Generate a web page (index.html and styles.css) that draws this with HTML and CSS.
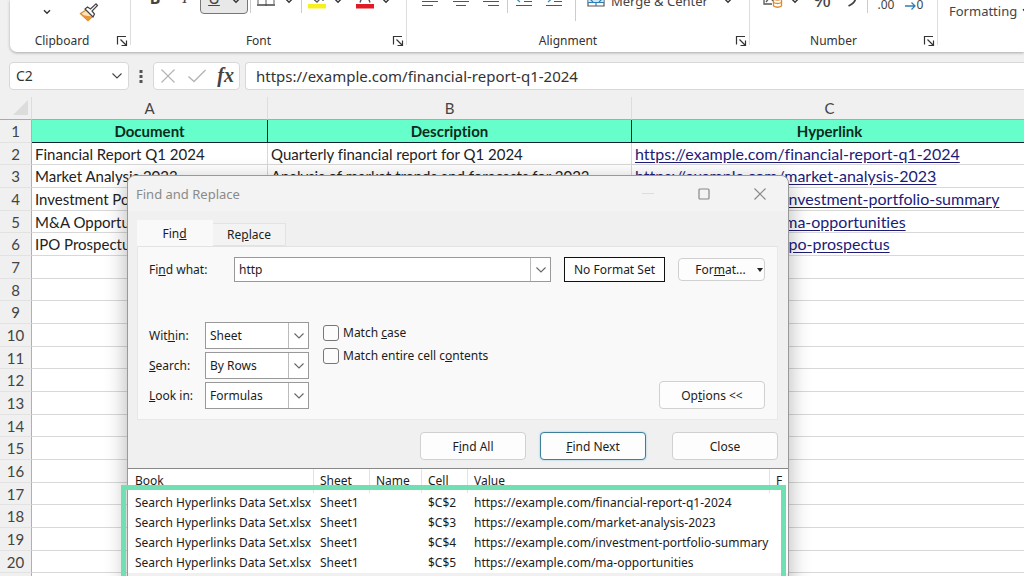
FILE: index.html
```html
<!DOCTYPE html>
<html lang="en">
<head>
<meta charset="utf-8">
<title>Find and Replace</title>
<link rel="stylesheet" href="styles.css">
</head>
<body>
<svg class="defs" aria-hidden="true">
  <symbol id="chev" viewBox="0 0 8 6"><path d="M1 1.2l3 3 3-3" fill="none" stroke="#333" stroke-width="1.4"/></symbol>
  <symbol id="down" viewBox="0 0 12 8"><path d="M1.5 1.5L6 6l4.500-4.500" fill="none" stroke="currentColor" stroke-width="1.1"/></symbol>
  <symbol id="launch" viewBox="0 0 12 12"><path d="M1.500 9.500V1.500H10M4.500 4.500l5.500 5.500M10.500 5.500V10.500H5.500" fill="none" stroke="#333" stroke-width="1.200"/></symbol>
</svg>
<div class="app">
  <header class="ribbon">
    <section class="group">
      <div class="tools tools-clip">
        <button class="paste" aria-label="Paste options"><svg width="8" height="6"><use href="#chev"/></svg></button>
        <button class="brush" aria-label="Format Painter"><svg width="20" height="20" viewBox="0 0 20 20"><path d="M1.500 11.500L8 7.500l6 6.500-5 4.500z" fill="#fbe3bd" stroke="#dd8a2c" stroke-width="1.300"/><path d="M3 13l6 5.500 4-4-4-.500z" fill="#e8963a"/><path d="M6 7l8 8 1.500-3-2.500-3 5.500-5.500-1.500-1.700L11.500 7 8.500 5z" fill="#fff" stroke="#444" stroke-width="1.200"/></svg></button>
      </div>
      <div class="caption"><span>Clipboard</span><button class="launch" aria-label="Clipboard settings"><svg width="12" height="12"><use href="#launch"/></svg></button></div>
    </section>
    <section class="group">
      <div class="tools tools-font">
        <button aria-label="Bold"><b>B</b></button>
        <button aria-label="Italic"><i class="serif">I</i></button>
        <button class="pressed" aria-label="Underline"><u>U</u><svg width="8" height="6"><use href="#chev"/></svg></button>
        <span class="sep"></span>
        <button aria-label="Borders"><svg width="18" height="20" viewBox="0 0 18 20"><path d="M1 0v16M9 0v18M17 0v16M1 10h16" fill="none" stroke="#777" stroke-width="1.200"/><path d="M0 17h18" stroke="#444" stroke-width="1.500"/></svg></button>
        <button class="menu" aria-label="Border options"><svg width="8" height="6"><use href="#chev"/></svg></button>
        <span class="sep"></span>
        <button aria-label="Fill color"><svg width="20" height="24" viewBox="0 0 20 24"><path d="M4 11l6-6 5 6-5 5zM16 10v5" fill="#fff" stroke="#555" stroke-width="1.300"/><path d="M1 18h18v4.500H1z" fill="#f7f01c"/></svg></button>
        <button class="menu" aria-label="Fill options"><svg width="8" height="6"><use href="#chev"/></svg></button>
        <button aria-label="Font color"><svg width="20" height="24" viewBox="0 0 20 24"><path d="M5 16.500L10 3l5 13.500M6.500 12.500h7" fill="none" stroke="#555" stroke-width="1.400"/><path d="M1 18h18v4.500H1z" fill="#e01b24"/></svg></button>
        <button class="menu" aria-label="Font color options"><svg width="8" height="6"><use href="#chev"/></svg></button>
      </div>
      <div class="caption"><span>Font</span><button class="launch" aria-label="Font settings"><svg width="12" height="12"><use href="#launch"/></svg></button></div>
    </section>
    <section class="group">
      <div class="tools tools-align">
        <button aria-label="Align left"><svg width="18" height="18" viewBox="0 0 18 18"><path d="M1 8.500h16M1 12.500h16M1 16.500h11" stroke="#555" stroke-width="1.200"/></svg></button>
        <button aria-label="Center"><svg width="18" height="18" viewBox="0 0 18 18"><path d="M1 8.500h16M1 12.500h16M4 16.500h10" stroke="#555" stroke-width="1.200"/></svg></button>
        <button aria-label="Align right"><svg width="18" height="18" viewBox="0 0 18 18"><path d="M1 8.500h16M1 12.500h16M6 16.500h11" stroke="#555" stroke-width="1.200"/></svg></button>
        <span class="sep"></span>
        <button aria-label="Decrease indent"><svg width="18" height="18" viewBox="0 0 18 18"><path d="M9 12.500h8M1 16.500h16M10 8.500h7" stroke="#555" stroke-width="1.200"/><path d="M5 6l-4 3.500L5 13M1 9.500h6" fill="none" stroke="#3a8fc4" stroke-width="1.300"/></svg></button>
        <button aria-label="Increase indent"><svg width="18" height="18" viewBox="0 0 18 18"><path d="M9 12.500h8M1 16.500h16M10 8.500h7" stroke="#555" stroke-width="1.200"/><path d="M3 6l4 3.500L3 13M1 9.500h6" fill="none" stroke="#3a8fc4" stroke-width="1.300"/></svg></button>
        <span class="sep long"></span>
        <button aria-label="Merge"><svg width="18" height="18" viewBox="0 0 18 18"><path d="M1 1h16v16H1z" fill="#fff" stroke="#555" stroke-width="1.200"/><path d="M1.500 6h15v7h-15z" fill="#cde8f7"/><path d="M4 10.500h10M6 8l-2.500 2.500L6 13M12 8l2.500 2.500L12 13M1 13.500h16M9 13.500V17" fill="none" stroke="#2e7fb5" stroke-width="1.200"/></svg></button>
        <button class="merge">Merge &amp; Center</button>
        <button class="menu" aria-label="Merge options"><svg width="8" height="6"><use href="#chev"/></svg></button>
      </div>
      <div class="caption"><span>Alignment</span><button class="launch" aria-label="Alignment settings"><svg width="12" height="12"><use href="#launch"/></svg></button></div>
    </section>
    <section class="group">
      <div class="tools tools-num">
        <button aria-label="Accounting format"><svg width="20" height="22" viewBox="0 0 20 22"><path d="M1 2v15h8M3 15l4-5 3 4" fill="none" stroke="#555" stroke-width="1.300"/><path d="M10.500 6h8v13q-4 2.500-8 0z" fill="#fff" stroke="#dd8a2c" stroke-width="1.300"/><path d="M10.500 12q4 2 8 0M10.500 15.500q4 2 8 0" fill="none" stroke="#dd8a2c" stroke-width="1.300"/></svg></button>
        <button class="menu" aria-label="Accounting options"><svg width="8" height="6"><use href="#chev"/></svg></button>
        <button class="big" aria-label="Percent">%</button>
        <button aria-label="Comma style"><svg width="10" height="20" viewBox="0 0 10 20"><path d="M5 5q4 1 3.500 5.500T1.500 18" fill="none" stroke="#444" stroke-width="1.800"/></svg></button>
        <span class="sep"></span>
        <button class="dec" aria-label="Increase decimal">.00</button>
        <button class="dec" aria-label="Decrease decimal"><svg width="12" height="14" viewBox="0 0 12 14"><path d="M0 7h10M6.500 3.500L10 7l-3.500 3.500" fill="none" stroke="#2e7fb5" stroke-width="1.300"/></svg>0</button>
      </div>
      <div class="caption"><span>Number</span><button class="launch" aria-label="Number settings"><svg width="12" height="12"><use href="#launch"/></svg></button></div>
    </section>
    <section class="group last"><button class="cond">Formatting <svg width="8" height="6"><use href="#chev"/></svg></button></section>
  </header>

  <div class="formula-bar">
    <div class="box name-box"><input aria-label="Name box" value="C2"><svg width="12" height="8"><use href="#down"/></svg></div>
    <svg class="dots" width="4" height="14" viewBox="0 0 4 14"><path d="M.500 1h3v3h-3zM.500 6h3v3h-3zM.500 11h3v3h-3z" fill="#555"/></svg>
    <div class="box fx-box">
      <button aria-label="Cancel"><svg width="16" height="16" viewBox="0 0 16 16"><path d="M1.500 1.500l13 13M14.500 1.500l-13 13" stroke="#b5b5b5" stroke-width="1.200"/></svg></button>
      <button aria-label="Enter"><svg width="20" height="16" viewBox="0 0 20 16"><path d="M1.500 8.500l5.500 5L18.500 2" fill="none" stroke="#b5b5b5" stroke-width="1.400"/></svg></button>
      <button class="fx" aria-label="Insert function">fx</button>
    </div>
    <div class="box formula"><input aria-label="Formula" value="https://example.com/financial-report-q1-2024"></div>
  </div>

  <main class="sheet">
    <table class="grid">
      <colgroup><col class="c-num"><col class="c-a"><col class="c-b"><col></colgroup>
      <thead><tr><th class="corner"><svg width="15" height="15" viewBox="0 0 15 15"><path d="M15 0v15H0z" fill="#dcdcdc"/></svg></th><th>A</th><th>B</th><th>C</th></tr></thead>
      <tbody>
        <tr class="head"><th>1</th><td>Document</td><td>Description</td><td>Hyperlink</td></tr>
        <tr><th>2</th><td>Financial Report Q1 2024</td><td>Quarterly financial report for Q1 2024</td><td><a href="#">https://example.com/financial-report-q1-2024</a></td></tr>
        <tr><th>3</th><td>Market Analysis 2023</td><td>Analysis of market trends and forecasts for 2023</td><td><a href="#">https://example.com/market-analysis-2023</a></td></tr>
        <tr><th>4</th><td>Investment Portfolio</td><td></td><td><a href="#">https://example.com/investment-portfolio-summary</a></td></tr>
        <tr><th>5</th><td>M&amp;A Opportunities</td><td></td><td><a href="#">https://example.com/ma-opportunities</a></td></tr>
        <tr><th>6</th><td>IPO Prospectus</td><td></td><td><a href="#">https://example.com/ipo-prospectus</a></td></tr>
        <tr><th>7</th><td></td><td></td><td></td></tr>
        <tr><th>8</th><td></td><td></td><td></td></tr>
        <tr><th>9</th><td></td><td></td><td></td></tr>
        <tr><th>10</th><td></td><td></td><td></td></tr>
        <tr><th>11</th><td></td><td></td><td></td></tr>
        <tr><th>12</th><td></td><td></td><td></td></tr>
        <tr><th>13</th><td></td><td></td><td></td></tr>
        <tr><th>14</th><td></td><td></td><td></td></tr>
        <tr><th>15</th><td></td><td></td><td></td></tr>
        <tr><th>16</th><td></td><td></td><td></td></tr>
        <tr><th>17</th><td></td><td></td><td></td></tr>
        <tr><th>18</th><td></td><td></td><td></td></tr>
        <tr><th>19</th><td></td><td></td><td></td></tr>
        <tr><th>20</th><td></td><td></td><td></td></tr>
        <tr><th></th><td></td><td></td><td></td></tr>
      </tbody>
    </table>
  </main>

  <div class="dialog" role="dialog" aria-label="Find and Replace">
    <div class="titlebar">
      <span class="title">Find and Replace</span>
      <button aria-label="Minimize"><svg width="12" height="12" viewBox="0 0 12 12"><path d="M0 5.500h12" stroke="#ddd"/></svg></button>
      <button aria-label="Maximize"><svg width="12" height="12" viewBox="0 0 12 12"><rect x="1" y="1" width="10" height="10" rx="1" fill="none" stroke="#888" stroke-width="1.200"/></svg></button>
      <button aria-label="Close window"><svg width="12" height="12" viewBox="0 0 12 12"><path d="M.500.500l11 11M11.500.500l-11 11" stroke="#888" stroke-width="1.200"/></svg></button>
    </div>
    <div class="tabs"><button class="tab active">Fin<u>d</u></button><button class="tab">Re<u>p</u>lace</button></div>
    <div class="panel">
      <div class="find-row">
        <label for="what">Fi<u>n</u>d what:</label>
        <div class="combo"><input id="what" value="http"><button aria-label="History"><svg width="12" height="8"><use href="#down"/></svg></button></div>
        <output class="preview">No Format Set</output>
        <button class="btn format"><span>For<u>m</u>at...</span><svg width="6" height="4" viewBox="0 0 6 4"><path d="M0 0h6L3 4z" fill="#222"/></svg></button>
      </div>
      <div class="options">
        <div class="fields">
          <label for="within">Wit<u>h</u>in:</label><div class="combo"><select id="within"><option>Sheet</option></select><span><svg width="12" height="8"><use href="#down"/></svg></span></div>
          <label for="search"><u>S</u>earch:</label><div class="combo"><select id="search"><option>By Rows</option></select><span><svg width="12" height="8"><use href="#down"/></svg></span></div>
          <label for="look"><u>L</u>ook in:</label><div class="combo"><select id="look"><option>Formulas</option></select><span><svg width="12" height="8"><use href="#down"/></svg></span></div>
        </div>
        <div class="checks">
          <label><input type="checkbox"><span>Match <u>c</u>ase</span></label>
          <label><input type="checkbox"><span>Match entire cell c<u>o</u>ntents</span></label>
        </div>
        <button class="btn opt">Op<u>t</u>ions &lt;&lt;</button>
      </div>
    </div>
    <div class="actions"><button class="btn">F<u>i</u>nd All</button><button class="btn primary"><u>F</u>ind Next</button><button class="btn close">Close</button></div>
    <table class="results">
      <colgroup><col class="r-book"><col class="r-sheet"><col class="r-name"><col class="r-cell"><col><col class="r-last"></colgroup>
      <thead><tr><th>Book</th><th>Sheet</th><th>Name</th><th>Cell</th><th>Value</th><th>F</th></tr></thead>
      <tbody>
        <tr><td>Search Hyperlinks Data Set.xlsx</td><td>Sheet1</td><td></td><td>$C$2</td><td>https://example.com/financial-report-q1-2024</td><td></td></tr>
        <tr><td>Search Hyperlinks Data Set.xlsx</td><td>Sheet1</td><td></td><td>$C$3</td><td>https://example.com/market-analysis-2023</td><td></td></tr>
        <tr><td>Search Hyperlinks Data Set.xlsx</td><td>Sheet1</td><td></td><td>$C$4</td><td>https://example.com/investment-portfolio-summary</td><td></td></tr>
        <tr><td>Search Hyperlinks Data Set.xlsx</td><td>Sheet1</td><td></td><td>$C$5</td><td>https://example.com/ma-opportunities</td><td></td></tr>
      </tbody>
    </table>
    <div class="highlight"></div>
  </div>
</div>
</body>
</html>
```
FILE: styles.css
```css
* { box-sizing: border-box; }
body { margin: 0; background: #f0f0f0; color: #222; font: 12px "Noto Sans", sans-serif; }
button, input, select { font: inherit; color: inherit; margin: 0; }
button { padding: 0; border: 0; background: none; display: flex; align-items: center; justify-content: center; white-space: nowrap; }
.defs { position: absolute; width: 0; height: 0; }
.app { position: relative; height: 100vh; overflow: hidden; }

/* Ribbon */
.ribbon { display: grid; grid-template-columns: 121px 276px 343px 188px 1fr; height: 52px; margin-left: 10px; background: #fff; border-bottom-left-radius: 7px; box-shadow: 0 1px 3px rgba(0,0,0,.3); color: #444; }
.group { display: flex; flex-direction: column; justify-content: space-between; min-width: 0; border-right: 1px solid #ddd; margin-bottom: 7px; }
.last { border: 0; }
.caption { display: grid; grid-template-columns: 16px 1fr 16px; align-items: center; height: 16px; margin-bottom: -3px; color: #333; }
.caption span { grid-column: 2; text-align: center; margin-left: -16px; }
.group:nth-child(n+2) .caption span { margin-left: -20px; }
.launch { grid-column: 3; }
.tools { display: grid; height: 14px; margin-top: -18px; font-size: 16px; }
.tools > button { height: 32px; }
.tools-clip { grid-template-columns: 74px 10px; margin-top: 0; }
.tools-clip > button { height: 24px; }
.tools-font { grid-template-columns: 30px 30px 48px 4px 28px 18px 7px 24px 18px 36px 6px; padding-left: 9px; }
.tools-align { grid-template-columns: 30px 32px 28px 4px 30px 30px 12px 30px 108px 18px; padding-left: 8px; }
.tools-num { grid-template-columns: 34px 10px 44px 16px 14px 24px 32px; padding-left: 6px; }
.tools svg { flex: none; }
.tools .menu { padding-top: 6px; }
.serif { font-family: "Liberation Serif", serif; }
.pressed { gap: 12px; border: 1px solid #777; border-radius: 4px; background: #e8e8e8; }
.pressed svg { margin-top: 6px; }
.sep { width: 1px; height: 31px; justify-self: center; background: #ccc; }
.long { height: 39px; }
.tools .merge { font-size: 13px; justify-content: flex-start; padding-top: 6px; }
.big { font-size: 22px; }
.tools .dec { font-size: 12px; align-items: flex-end; padding-bottom: 1px; }
.cond { justify-content: flex-start; gap: 5px; margin: 1px 0 0 11px; font-size: 13px; height: 20px; }
.cond svg { flex: none; }

/* Formula bar */
.formula-bar { display: flex; align-items: center; height: 27px; margin: 10px 0 0 9px; }
.box { display: flex; align-items: center; height: 28px; background: #fff; border: 1px solid #d8d8d8; border-radius: 4px; }
.box input { width: 100%; border: 0; outline: 0; padding: 0; background: none; font-size: 15px; color: #333; }
.box .name, .name-box input { font-size: 14px; }
.name-box { width: 120px; padding: 0 5px 0 6px; color: #444; }
.name-box svg { flex: none; }
.dots { margin: 0 10px; }
.fx-box { width: 87px; padding: 0 5px 0 6px; justify-content: space-between; }
.fx { font: italic bold 20px "Liberation Serif", serif; color: #444; }
.formula { flex: 1; margin-left: 5px; padding-left: 10px; border-right: 0; border-radius: 4px 0 0 4px; }

/* Sheet */
.sheet { margin-top: 8px; }
.grid { width: 1028px; min-width: 100%; table-layout: fixed; border-collapse: separate; border-spacing: 0; font: 15px "Lato", sans-serif; font-variant-ligatures: none; color: #222; }
.c-num { width: 32px; }
.c-a { width: 236px; }
.c-b { width: 364px; }
.grid th { font-weight: 400; color: #444; padding: 0; line-height: 20px; background: #f0f0f0; border-right: 1px solid #b0b0b0; }
.grid thead th { height: 23px; border-right-color: #ddd; border-bottom: 1px solid #aaa; line-height: 21px; }
.grid .corner { text-align: right; vertical-align: bottom; }
.corner svg { display: inline-block; vertical-align: bottom; margin: 0 3px 4px 0; }
.grid tbody th { border-bottom: 1px solid #e2e2e2; }
.grid td { height: 23px; padding: 0 0 0 3px; line-height: 20px; background: #fff; border-right: 1px solid #d8d8d8; border-bottom: 1px solid #d8d8d8; white-space: nowrap; overflow: hidden; }
.grid tbody tr:nth-child(3n+2) td { height: 22px; }
.grid .head td { padding: 0; background: #66ffcc; border-color: #123; text-align: center; font-weight: 700; color: #0c2b20; }
.grid a { font-size: 16px; color: #1c1c78; text-underline-offset: 2px; }

/* Find and Replace window */
.dialog { position: absolute; left: 127px; top: 175px; width: 662px; height: 440px; background: #f0f0f0; border: 1px solid #999; border-radius: 8px 8px 0 0; box-shadow: 0 6px 22px rgba(0,0,0,.3); color: #1c1c1c; }
.titlebar { display: flex; align-items: center; height: 35px; padding: 0 14px 0 8px; border-radius: 8px 8px 0 0; background: #f3f3f3; }
.title { flex: 1; font-size: 13px; color: #8a8a8a; }
.titlebar button { width: 28px; margin-left: 28px; }
.tabs { display: flex; align-items: flex-end; height: 35px; padding-left: 9px; }
.tab { width: 73px; height: 23px; border: 1px solid #e3e3e3; border-left: 0; background: #f3f3f3; }
.tab.active { width: 76px; height: 26px; background: #f9f9f9; border-color: #f9f9f9; }
.panel { height: 174px; margin: 0 10px 0 9px; padding: 10px 12px 0 11px; background: #f9f9f9; border: 1px solid #e8e8e8; border-top-color: #e3e3e3; }
.find-row { display: flex; align-items: center; height: 25px; }
.find-row label { width: 85px; }
.find-row .combo { flex: 1; height: 25px; }
.combo { display: flex; min-width: 0; height: 27px; border: 1px solid #999; background: #fff; color: #666; }
.combo input, .combo select { flex: 1; min-width: 0; padding: 0 4px; border: 0; outline: 0; background: none; appearance: none; color: #1c1c1c; }
.combo button, .combo span { display: flex; align-items: center; justify-content: center; width: 20px; border-left: 1px solid #bbb; }
.preview { display: flex; align-items: center; justify-content: center; width: 101px; height: 25px; margin: 0 13px; border: 1px solid #111; background: #fff; white-space: nowrap; }
.btn { width: 106px; height: 28px; background: #fdfdfd; border: 1px solid #d0d0d0; border-radius: 4px; }
.format { width: 87px; height: 23px; gap: 11px; padding-left: 15px; }
.options { display: flex; height: 87px; margin-top: 40px; }
.fields { display: grid; grid-template-columns: 56px 104px; gap: 3px 0; align-content: start; align-items: center; }
.checks { display: flex; flex: 1; flex-direction: column; gap: 6px; margin: 2px 0 0 14px; }
.checks label { display: flex; align-items: center; height: 17px; gap: 4px; }
.checks input { appearance: none; width: 16px; height: 16px; margin: 0; border: 1px solid #777; border-radius: 3px; background: #fcfcfc; }
.opt { align-self: flex-end; }
.actions { display: flex; justify-content: flex-end; gap: 14px; height: 48px; padding: 12px 10px 0 0; }
.close { margin-left: 12px; }
.primary { border-color: #3b7f9c; box-shadow: 0 0 2px #7cc6e6; }
.results { width: 100%; table-layout: fixed; border-collapse: separate; border-spacing: 0; background: #fff; border-top: 1px solid #888; }
.r-book { width: 186px; }
.r-sheet { width: 56px; }
.r-name { width: 52px; }
.r-cell { width: 46px; }
.r-last { width: 18px; }
.results th, .results td { padding: 0 0 0 6px; text-align: left; font-weight: 400; white-space: nowrap; line-height: 16px; }
.results th { height: 24px; border-right: 1px solid #e3e3e3; }
.results th:last-child { border-right: 0; }
.results td { height: 20px; }
.results tr > :first-child { padding-left: 7px; }
.highlight { position: absolute; left: -7px; right: 2px; top: 309px; bottom: 0; border: 5px solid #70dfb1; }
```
